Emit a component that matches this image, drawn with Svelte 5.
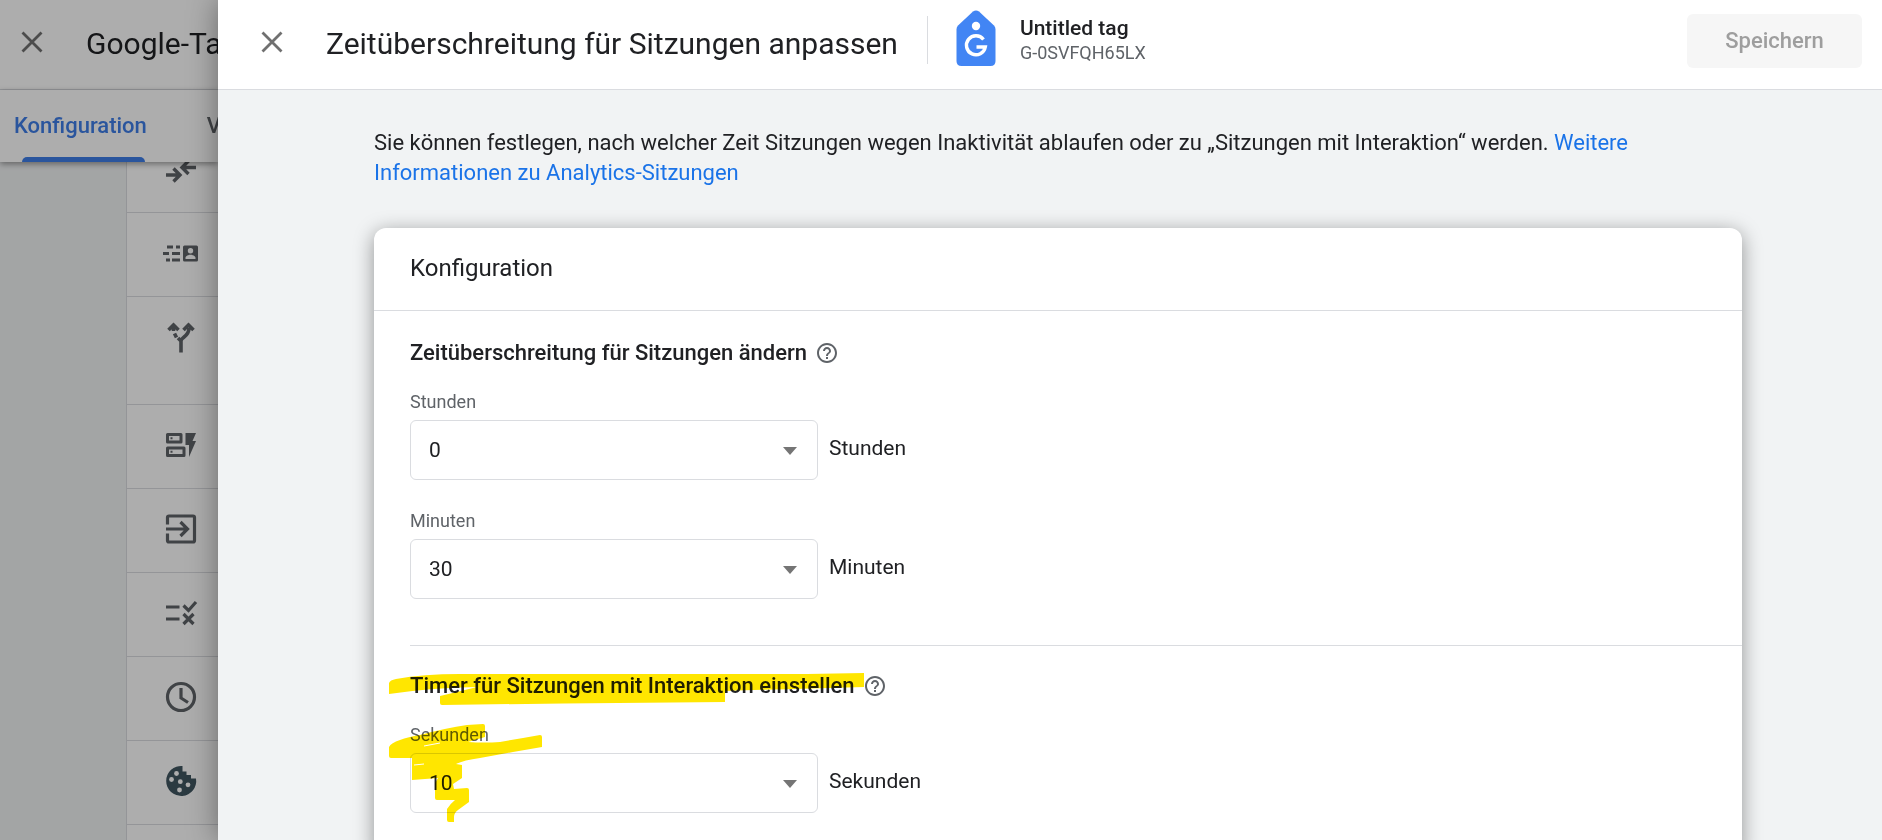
<script>
  const rows = [
    { id: 'merge' },
    { id: 'contact' },
    { id: 'split', tall: true },
    { id: 'dynamic' },
    { id: 'input' },
    { id: 'rule' },
    { id: 'clock' },
    { id: 'cookie' },
    { id: 'none' }
  ];
  const range = (n) => Array.from({ length: n }, (_, i) => i);
  let hours = $state(0);
  let minutes = $state(30);
  let seconds = $state(10);
</script>

{#snippet close()}
  <svg width="22" height="22" viewBox="0 0 22 22" aria-hidden="true"><path d="M1.5 1.5l19 19M20.5 1.5l-19 19" stroke="#707070" stroke-width="2.8" fill="none" /></svg>
{/snippet}

{#snippet help()}
  <button class="help" aria-label="Hilfe">
    <svg width="24" height="24" viewBox="0 0 24 24" fill="#5f6368"><path d="M11 18h2v-2h-2v2zm1-16C6.48 2 2 6.48 2 12s4.480 10 10 10 10-4.480 10-10S17.520 2 12 2zm0 18c-4.410 0-8-3.590-8-8s3.590-8 8-8 8 3.590 8 8-3.590 8-8 8zm0-14c-2.210 0-4 1.790-4 4h2c0-1.100.9-2 2-2s2 .9 2 2c0 2-3 1.750-3 5h2c0-2.250 3-2.500 3-5 0-2.210-1.790-4-4-4z" /></svg>
  </button>
{/snippet}

{#snippet arrow()}
  <svg class="arrow" width="14" height="8" viewBox="0 0 14 8" aria-hidden="true"><path d="M0 0h14L7 8z" fill="#757575" /></svg>
{/snippet}

<div class="page">
  <div class="under">
    <header class="top">
      <button class="icon" aria-label="Schließen">{@render close()}</button>
      <h1>Google-Tag</h1>
    </header>
    <nav>
      <a class="active" href="#konfiguration">Konfiguration</a>
      <a href="#verwaltung">V</a>
    </nav>
    <ul>
      {#each rows as row}
        <li class:tall={row.tall}>
          <svg width="36" height="36" viewBox="0 0 36 36" fill="#5f6368" stroke="#5f6368" stroke-width="0" aria-hidden="true">
            {#if row.id === 'merge'}
              <path d="M3 24h12M10.500 17.500l6.500 6.500-6.500 6.500M33 16.500H21M25.500 10l-6.500 6.500 6.500 6.500" fill="none" stroke-width="3.400" />
            {:else if row.id === 'contact'}
              <path d="M4 10.500h6v3H4zM13 10.500h4v3h-4zM0 17h6v3H0zM9 17h8v3H9zM3 23.500h4v3H3zM9 23.500h8v3H9z" />
              <path fill-rule="evenodd" d="M21.500 10.500h12a1.500 1.500 0 0 1 1.500 1.500v13a1.500 1.500 0 0 1-1.500 1.500h-12a1.500 1.500 0 0 1-1.500-1.500v-13a1.500 1.500 0 0 1 1.500-1.500zM27.500 13a2.700 2.700 0 1 0 0 5.400 2.700 2.700 0 0 0 0-5.400zM22.500 24h10v-1.200c0-2-3.300-3-5-3s-5 1-5 3z" />
            {:else if row.id === 'split'}
              <path d="M18 33.500v-12.500M18 22c0-4 8-4 8-13M18 22l-3-3M5.500 11l5-5 5 5M20.500 11l5-5 5 5M10.500 7v5M11.500 14.500l2 4" fill="none" stroke-width="3.600" />
            {:else if row.id === 'dynamic'}
              <path d="M4.500 7.500h13.500v7.500h-13.500zM4.500 21h16.500v7.500h-16.500z" fill="none" stroke-width="3" stroke-linejoin="round" />
              <path d="M7.500 10.300h2v2h-2zM7.500 23.800h2v2h-2zM22.500 6H33l-3.500 8H33l-7 16V18h-3.500z" />
            {:else if row.id === 'input'}
              <path d="M4.500 13.500v-7q0-1.500 1.500-1.500h24q1.500 0 1.500 1.500v23q0 1.500-1.500 1.500H6q-1.500 0-1.500-1.500v-7M3 18h21M17.500 11l7 7-7 7" fill="none" stroke-width="3.200" />
            {:else if row.id === 'rule'}
              <path d="M3 12h13.500M3 24h13.500M20.500 10.500l5 5L33 7M20.500 19l10 10M30.500 19l-10 10" fill="none" stroke-width="3.200" />
            {:else if row.id === 'clock'}
              <path d="M18 4.500a13.500 13.500 0 1 0 0 27 13.500 13.500 0 0 0 0-27zM18 9v10l7 4.500" fill="none" stroke-width="3.200" />
            {:else if row.id === 'cookie'}
              <path fill="#405661" d="M19.500 3A15 15 0 1 0 33 15.500h-5V12h-4.500V8.500h-4z" />
              <g fill="#fff"><circle cx="13.500" cy="10.500" r="2.400" /><circle cx="8.500" cy="16.500" r="2.400" /><circle cx="17.300" cy="18.700" r="2.400" /><circle cx="25" cy="21.800" r="2.400" /><circle cx="16.500" cy="27" r="2.400" /></g>
            {/if}
          </svg>
        </li>
      {/each}
    </ul>
  </div>
  <div class="scrim"></div>

  <section class="drawer" aria-labelledby="title">
    <header class="top">
      <button class="icon" aria-label="Schließen">{@render close()}</button>
      <h2 id="title">Zeitüberschreitung für Sitzungen anpassen</h2>
      <div class="tag">
        <svg width="40" height="56" viewBox="0 0 40 56" aria-hidden="true">
          <path d="M17 1.500q3-2 6 0L38 15.500q1.500 1.500 1.500 4V51q0 5-5 5h-29q-5 0-5-5V19.500q0-2.500 1.500-4z" fill="#4285f4" />
          <circle cx="20" cy="16" r="4.200" fill="#fff" />
          <path d="M27.500 29.500A9.500 9.500 0 1 0 29.300 37H20.500" fill="none" stroke="#fff" stroke-width="3.400" />
        </svg>
        <div>
          <strong>Untitled tag</strong>
          <span>G-0SVFQH65LX</span>
        </div>
      </div>
      <button class="save" disabled>Speichern</button>
    </header>

    <main>
      <p>Sie können festlegen, nach welcher Zeit Sitzungen wegen Inaktivität ablaufen oder zu „Sitzungen mit Interaktion“ werden. <a href="#hilfe">Weitere Informationen zu Analytics-Sitzungen</a></p>
      <div class="card">
        <h3>Konfiguration</h3>
        <div class="group">
          <h4>Zeitüberschreitung für Sitzungen ändern {@render help()}</h4>
          <label for="hours">Stunden</label>
          <div class="field">
            <div class="select"><select id="hours" bind:value={hours}>{#each range(8) as n}<option value={n}>{n}</option>{/each}</select>{@render arrow()}</div>
            <span>Stunden</span>
          </div>
          <label for="minutes">Minuten</label>
          <div class="field">
            <div class="select"><select id="minutes" bind:value={minutes}>{#each range(12) as n}<option value={n * 5}>{n * 5}</option>{/each}</select>{@render arrow()}</div>
            <span>Minuten</span>
          </div>
        </div>
        <div class="group">
          <h4>Timer für Sitzungen mit Interaktion einstellen {@render help()}</h4>
          <label for="seconds">Sekunden</label>
          <div class="field">
            <div class="select"><select id="seconds" bind:value={seconds}>{#each range(6) as n}<option value={n * 10 + 10}>{n * 10 + 10}</option>{/each}</select>{@render arrow()}</div>
            <span>Sekunden</span>
          </div>
          <svg class="marker" width="490" height="160" viewBox="0 0 490 160" fill="#ffe600" aria-hidden="true">
            <path d="M1 15Q2 12 8 11Q35 6 72 6H419L476 5V19Q400 21 337 23V34Q200 35 54 37Q52 37 52 35V28Q65 25 89 19Q40 20 1 26z" />
            <path d="M1 79Q3 75 12 72Q20 69 32 67Q58 60 79 57L95 56Q97 56 97 58V69L80 74Q96 75 112 74L135 70L152 67Q154 67 154 69V79L125 84L92 90Q76 92 68 96L74 97V110L65 116L66 121L79 120Q81 120 81 122V134L70 142Q66 145 66 149V154H61Q59 154 59 152V141Q62 136 67 132H49Q47 132 47 130V115L50 110L24 112V90H3Q1 90 1 88z" />
            <path d="M36 78L52 75M26 97L36 96" stroke="#fff" stroke-width="1" />
          </svg>
        </div>
      </div>
    </main>
  </section>
</div>

<style>
  :global(body) { margin: 0; overflow: hidden; }
  * { box-sizing: border-box; }
  .page { position: relative; height: 100vh; font-family: Roboto, sans-serif; color: #202124; background: #f1f3f4; overflow: hidden; }
  button { font: inherit; border: 0; padding: 0; background: none; }
  h1, h2, h3, h4, p, ul { margin: 0; padding: 0; font-weight: 400; }
  svg { display: block; flex: none; }
  .under { isolation: isolate; width: 218px; overflow: hidden; }
  .top { display: flex; align-items: center; height: 90px; padding: 0 20px; border-bottom: 1px solid #dadce0; background: #fff; }
  .icon { display: grid; place-items: center; width: 24px; height: 24px; flex: none; margin-bottom: 6px; }
  h1, h2 { margin: 0 0 2px 42px; font-size: 30px; line-height: 40px; white-space: nowrap; }
  nav { position: relative; z-index: 1; display: flex; gap: 60px; height: 72px; padding: 0 14px; background: #fff; box-shadow: 0 2px 6px #0006; font-weight: 500; font-size: 22px; line-height: 72px; }
  nav a { color: #5f6368; text-decoration: none; }
  nav .active { position: relative; color: #3f7ee8; }
  nav .active::after { content: ''; position: absolute; left: 8px; right: 2px; bottom: 0; height: 5px; border-radius: 5px 5px 0 0; background: #3f7ee8; }
  ul { list-style: none; margin: -33px 0 0 126px; background: #fff; border-left: 1px solid #dadce0; }
  li { height: 84px; padding: 22px 36px; border-bottom: 1px solid #dadce0; }
  li.tall { height: 108px; }
  .scrim { position: absolute; inset: 0; background: #00000052; }
  .drawer { position: absolute; inset: 0 0 0 218px; overflow: hidden; background: #f1f3f4; box-shadow: 0 0 28px #0006; }
  .drawer .top { padding-left: 42px; }
  .tag { display: flex; align-items: center; gap: 24px; height: 48px; margin: 0 auto 10px 29px; padding-left: 28px; border-left: 1px solid #dadce0; }
  .tag svg { margin-bottom: 4px; }
  .tag strong, .tag span { display: block; }
  .tag strong { font-weight: 500; font-size: 21px; line-height: 26px; }
  .tag span { font-size: 18px; line-height: 24px; color: #5f6368; }
  .save { width: 175px; height: 54px; margin-bottom: 8px; border-radius: 6px; background: #f6f6f6; color: #9e9e9e; font-weight: 500; font-size: 22px; }
  main { padding: 38px 140px 0 156px; font-size: 21px; line-height: 30px; }
  p { max-width: 1280px; font-size: 22px; }
  p a { color: #1a73e8; text-decoration: none; }
  .card { margin-top: 40px; border-radius: 12px; background: #fff; box-shadow: 0 4px 20px #0006; }
  h3 { padding: 19px 36px 21px; font-size: 24px; line-height: 42px; border-bottom: 1px solid #dadce0; }
  .group { position: relative; margin-left: 36px; padding: 27px 0 46px; }
  .group + .group { border-top: 1px solid #dadce0; padding-top: 25px; }
  h4 { display: flex; align-items: center; gap: 8px; font-weight: 500; font-size: 22px; line-height: 30px; margin-bottom: 21px; }
  .help { display: block; }
  label { display: block; font-size: 18px; line-height: 25px; color: #5f6368; margin-bottom: 6px; }
  .field { display: flex; align-items: center; gap: 11px; }
  .field span { padding-bottom: 4px; }
  .field + label { margin-top: 28px; }
  .select { position: relative; width: 408px; }
  select { display: block; appearance: none; width: 100%; height: 60px; padding: 0 18px; border: 1px solid #dadce0; border-radius: 6px; background: #fff; font: inherit; color: #202124; }
  .arrow { position: absolute; right: 21px; top: 27px; pointer-events: none; }
  .marker { position: absolute; left: -22px; top: 22px; mix-blend-mode: multiply; pointer-events: none; }
</style>
